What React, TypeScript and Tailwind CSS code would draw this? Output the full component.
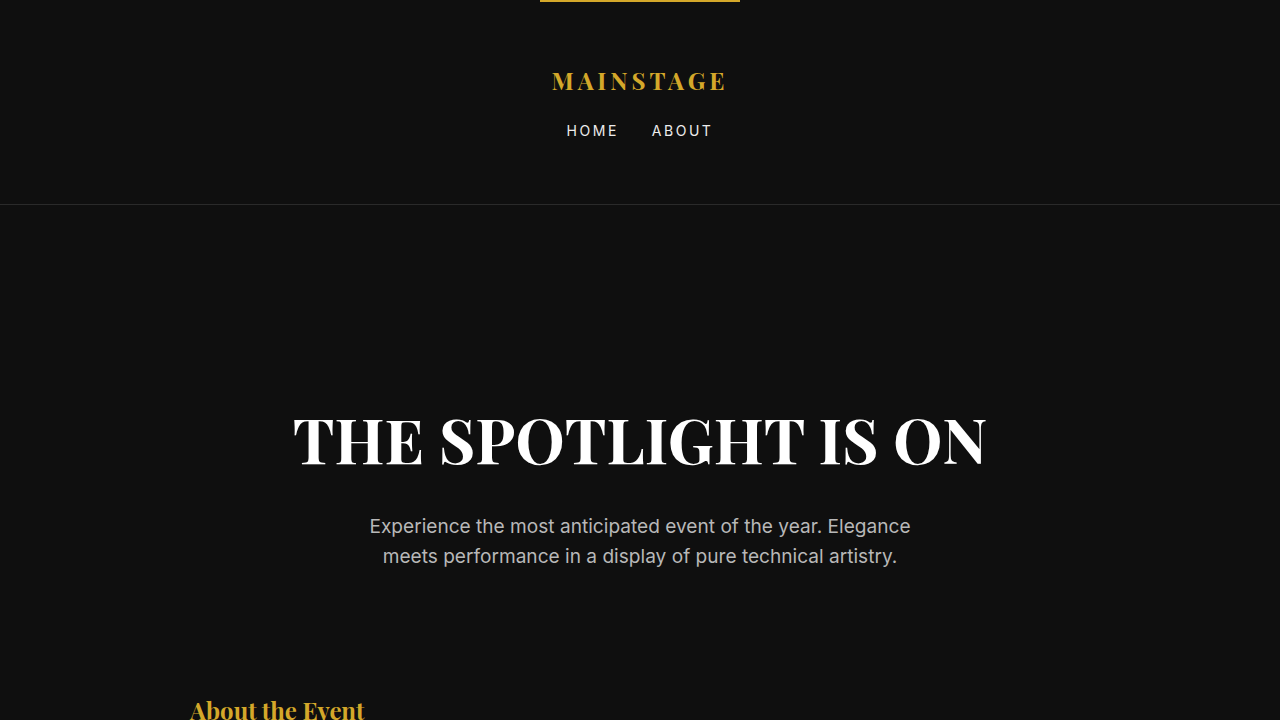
const serif = { fontFamily: '"Playfair Display", "Liberation Serif", serif' };

export default function App() {
  return (
    <div
      className="min-h-screen bg-[#0f0f0f] text-white"
      style={{ fontFamily: 'Inter, "Liberation Sans", sans-serif' }}
    >
      <header className="relative border-b border-[#2a2a2a] pt-[59px] pb-[63px] text-center">
        <div className="absolute left-1/2 top-0 h-[2px] w-[200px] -translate-x-1/2 bg-[#d4a82a]" />
        <div
          className="text-[24px] font-bold leading-[42px] tracking-[0.165em] text-[#d4a82a]"
          style={serif}
        >
          MAINSTAGE
        </div>
        <nav className="mt-[20px] flex justify-center gap-[33px] text-sm tracking-[0.18em] text-[#ececec]">
          <a href="#">HOME</a>
          <a href="#">ABOUT</a>
        </nav>
      </header>

      <section className="px-6 pt-[199px] pb-[120px] text-center">
        <h1 className="text-[62.5px] font-bold leading-[1.1] text-white" style={serif}>
          THE SPOTLIGHT IS ON
        </h1>
        <p className="mx-auto mt-[38px] max-w-[560px] text-[19.1px] leading-[1.6] text-[#b8b8b8]">
          Experience the most anticipated event of the year. Elegance meets performance in a
          display of pure technical artistry.
        </p>
      </section>

      <section className="mx-auto max-w-[900px] pb-20">
        <h2 className="text-[24px] font-bold text-[#d4a82a]" style={serif}>
          About the Event
        </h2>
      </section>
    </div>
  );
}
